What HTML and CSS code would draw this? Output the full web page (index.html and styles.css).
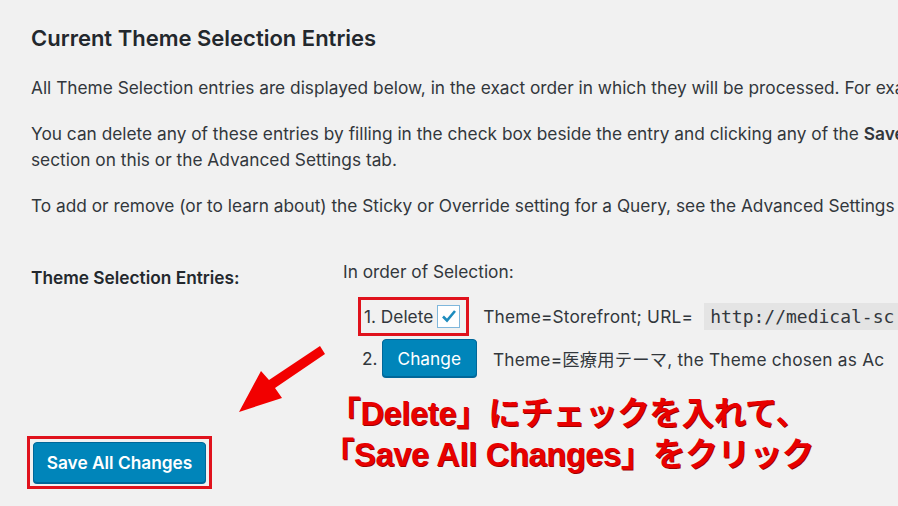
FILE: index.html
```html
<!DOCTYPE html>
<html lang="ja">
<head>
    <meta charset="UTF-8">
    <meta name="viewport" content="width=device-width, initial-scale=1.0">
    <title>Theme Selection Entries</title>
<link rel="stylesheet" href="styles.css">
</head>
<body>
    <div class="wrap">
        <h2>Current Theme Selection Entries</h2>
        <p>All Theme Selection entries are displayed below, in the exact order in which they will be processed. For exa</p>
        <p>You can delete any of these entries by filling in the check box beside the entry and clicking any of the <b>Save</b><br>section on this or the Advanced Settings tab.</p>
        <p>To add or remove (or to learn about) the Sticky or Override setting for a Query, see the Advanced Settings t</p>

        <div class="form-row">
            <div class="label">Theme Selection Entries:</div>
            <div class="field">
                <div class="order">In order of Selection:</div>
                <div class="entry">
                    <span class="mark">1. Delete <span class="check">
                        <svg width="16" height="14" viewBox="0 0 16 14"><path d="M2 7.5 L6 11.5 L14 2" fill="none" stroke="#1e8cbe" stroke-width="2.6"/></svg>
                    </span></span>
                    <span class="desc">Theme=Storefront; URL= <code>http://medical-sc</code></span>
                </div>
                <div class="entry">
                    <span class="num">2.</span>
                    <button class="btn">Change</button>
                    <span class="desc">Theme=医療用テーマ, the Theme chosen as Ac</span>
                </div>
            </div>
        </div>

        <div class="submit">
            <span class="highlight"><button class="btn btn-save">Save All Changes</button></span>
        </div>
    </div>

    <svg class="arrow" width="100" height="75" viewBox="0 0 100 75">
        <path d="M91 4 L96 12 L46 46 L53 56 L10 70 L32 29 L40 38 Z" fill="#f20000"/>
    </svg>
    <div class="note">「Delete」にチェックを入れて、<br>「Save All Changes」をクリック</div>
</body>
</html>
```

FILE: styles.css
```css
body {
  background-color: #f1f1f1;
  color: #32373c;
  font-family: "Inter", "Noto Sans CJK JP", sans-serif;
  font-size: 17.3px;
  margin: 0;
  padding: 0;
  overflow: hidden;
}

.wrap {
  padding: 24px 0 0 31px;
  white-space: nowrap;
}

h2 {
  font-size: 22px;
  font-weight: 600;
  color: #23282d;
  line-height: 28px;
  margin: 0 0 23px 0;
}

p {
  line-height: 26px;
  margin: 0 0 20px 0;
}

b {
  font-weight: 600;
}

.form-row {
  display: flex;
  margin-top: 40px;
}

.label {
  flex-shrink: 0;
  width: 312px;
  font-weight: 600;
  color: #23282d;
  padding-top: 6px;
  line-height: 26px;
}

.field {
  display: flex;
  flex-direction: column;
}

.order {
  line-height: 26px;
  margin-bottom: 10px;
}

.entry {
  display: flex;
  align-items: center;
  height: 42px;
}

.mark {
  display: flex;
  align-items: center;
  gap: 4px;
  border: 3px solid #e0121c;
  padding: 5px 6px 5px 3px;
  margin-left: 15px;
  margin-right: 14px;
}

.desc {
  letter-spacing: 0.2px;
}

.check {
  display: flex;
  align-items: center;
  justify-content: center;
  width: 21px;
  height: 21px;
  border: 1.5px solid #7fb7dc;
  background: #fff;
}

code {
  font-family: "DejaVu Sans Mono", monospace;
  font-size: 18px;
  letter-spacing: 0;
  background: #e4e4e4;
  padding: 3px 30px 3px 6px;
  margin-left: 6px;
}

.num {
  margin-left: 19px;
  margin-right: 4px;
}

.btn {
  background: #0085ba;
  border: 1px solid #006799;
  border-radius: 4px;
  color: #fff;
  font-family: inherit;
  font-size: 17.3px;
  padding: 0 15px;
  height: 38px;
  box-shadow: 0 1px 0 #006799;
}

.entry .btn {
  margin-right: 16px;
}

.submit {
  margin-top: 57px;
  margin-left: -4px;
}

.highlight {
  display: inline-block;
  border: 3px solid #e0121c;
  padding: 3px;
}

.btn-save {
  display: block;
  font-weight: 600;
  width: 173px;
  height: 41px;
  padding: 0;
}

.arrow {
  position: absolute;
  left: 229px;
  top: 342px;
}

.note {
  position: absolute;
  left: 308px;
  top: 394px;
  width: 520px;
  text-align: center;
  color: #e80000;
  font-family: "Liberation Sans", "Noto Sans CJK JP", sans-serif;
  font-weight: 700;
  font-size: 32.5px;
  line-height: 41px;
  letter-spacing: -0.3px;
  text-shadow: 1px 1px 0 #9a0000;
}
```
